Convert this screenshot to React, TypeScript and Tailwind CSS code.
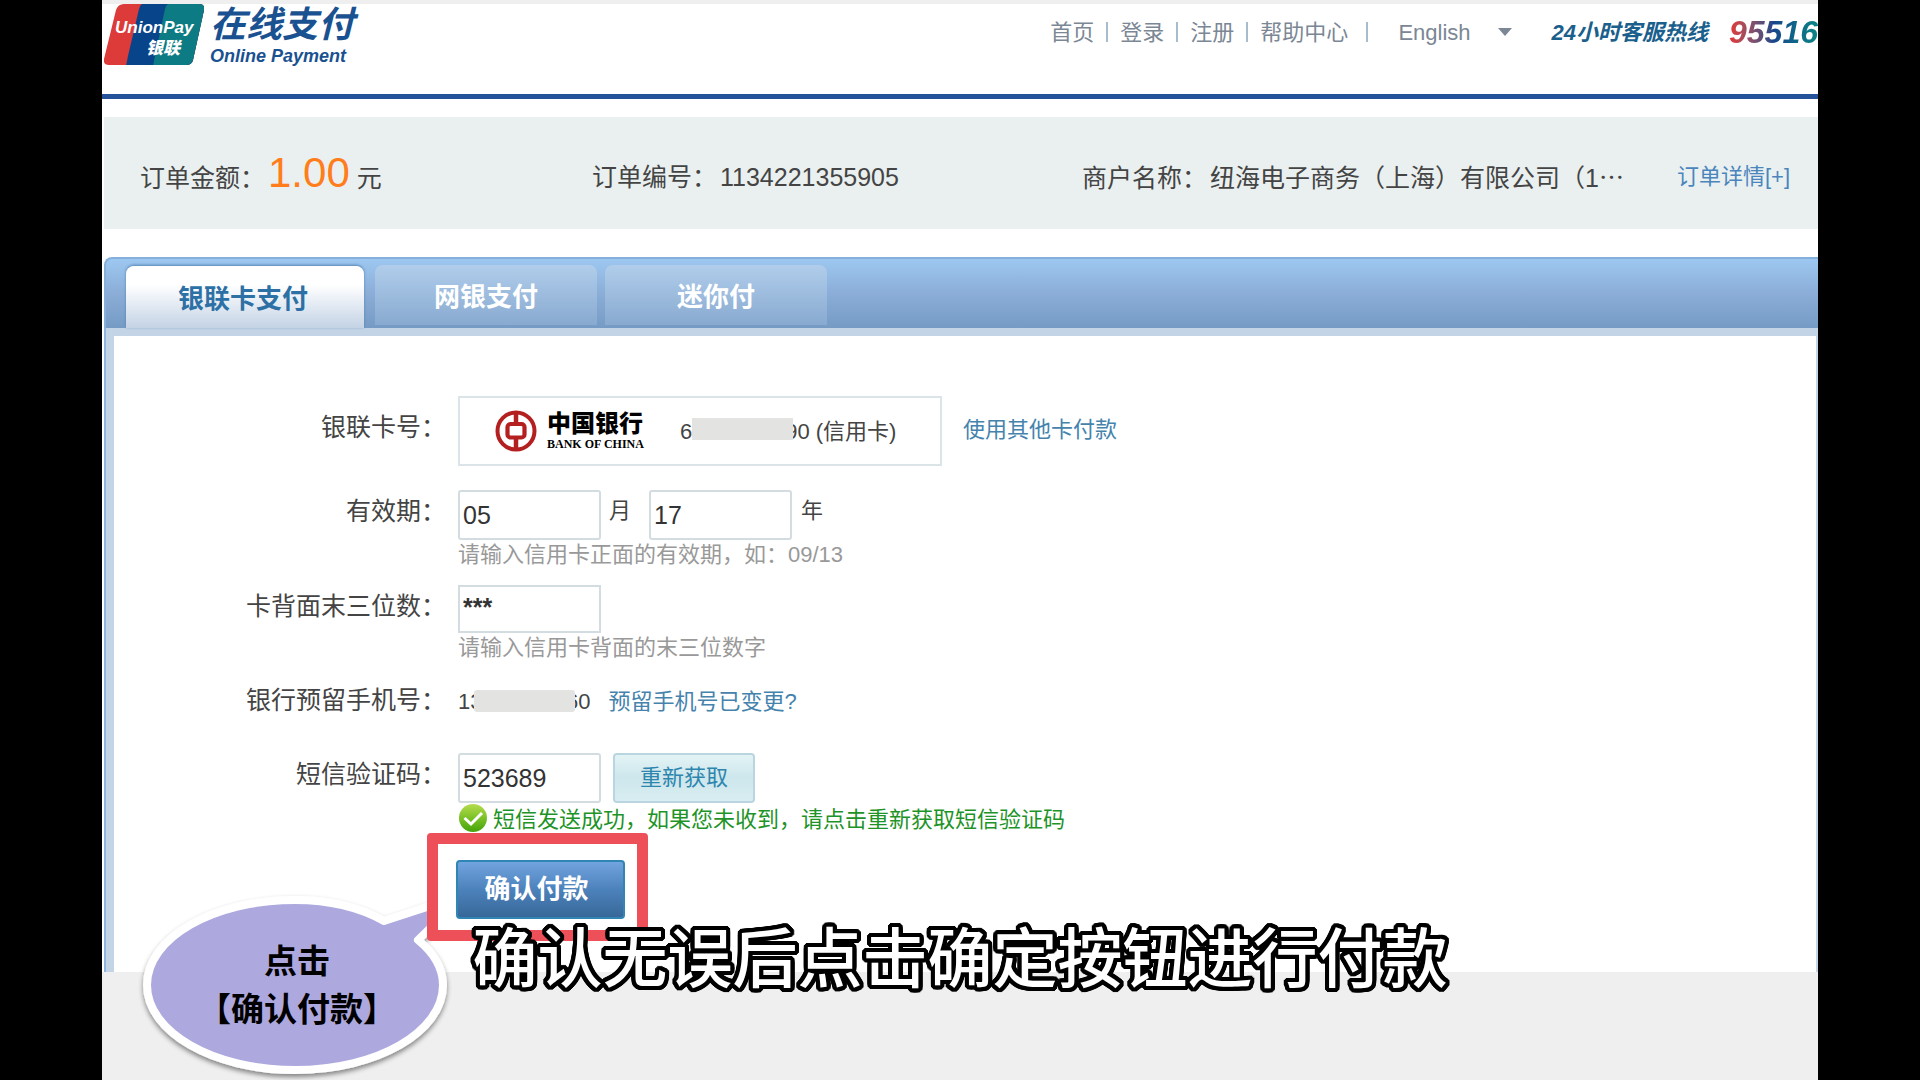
import React from "react";

const NAV_ITEMS = ["首页", "登录", "注册", "帮助中心"];

function UnionPayLogo() {
  return (
    <svg className="h-[62px] w-[100px] shrink-0" viewBox="0 0 100 62" role="img" aria-label="UnionPay 银联">
      <defs>
        <clipPath id="card">
          <path d="M20 0H95Q101 0 100 6L89 56Q88 61 82 61H5Q-1 61 0 55L12 6Q14 0 20 0Z" />
        </clipPath>
      </defs>
      <g clipPath="url(#card)">
        <rect width="100" height="62" fill="#dd3a3a" />
        <path d="M38 0H100V62H22L24 52L35 5Q36 1 38 0Z" fill="#084489" />
        <path d="M64 0H100V62H49L51 52L61 5Q62 1 64 0Z" fill="#0d7b83" />
      </g>
      <text x="11" y="29" fill="#fff" fontFamily="Liberation Sans" fontStyle="italic" fontWeight="700" fontSize="17">
        UnionPay
      </text>
      <text x="42" y="50" fill="#fff" fontFamily="Noto Sans CJK SC" fontStyle="italic" fontWeight="900" fontSize="17">
        银联
      </text>
    </svg>
  );
}

function BankMark() {
  return (
    <svg className="h-[42px] w-[42px]" viewBox="0 0 42 42" fill="none" stroke="#b3201f" aria-hidden="true">
      <circle cx="21" cy="21" r="18.5" strokeWidth="4" />
      <path d="M21 3V13M21 28V39" strokeWidth="4.5" />
      <rect x="12.5" y="14" width="17" height="13.5" rx="3" strokeWidth="4.2" />
    </svg>
  );
}

function SuccessIcon() {
  return (
    <svg className="h-[30px] w-[30px]" viewBox="0 0 30 30" aria-hidden="true">
      <defs>
        <linearGradient id="ok" x1="0" y1="0" x2="0" y2="1">
          <stop offset="0" stopColor="#b5dc4e" />
          <stop offset="0.5" stopColor="#7cc128" />
          <stop offset="1" stopColor="#44a307" />
        </linearGradient>
      </defs>
      <circle cx="15" cy="14" r="14" fill="url(#ok)" />
      <path d="M6.500 14L13 20L24 9" fill="none" stroke="#fff" strokeWidth="3" />
    </svg>
  );
}

function Header() {
  return (
    <header className="flex items-start justify-between border-b-[5px] border-[#24529a] bg-white">
      <div className="flex h-[90px] gap-[6px] pl-[2px]">
        <UnionPayLogo />
        <div className="font-bold italic text-[#1a5190]">
          <div className="text-[36px] leading-[42px]">在线支付</div>
          <div className="text-[18px] leading-[20px]">Online Payment</div>
        </div>
      </div>
      <div className="flex h-[56px] items-center text-[22px] text-[#7b8794]">
        <nav className="flex items-center">
          {NAV_ITEMS.map((item) => (
            <React.Fragment key={item}>
              <a href="#">{item}</a>
              <span className="mx-[12px] h-[20px] w-[2px] bg-[#a9bccb] last:mx-[18px]" />
            </React.Fragment>
          ))}
        </nav>
        <button type="button" className="ml-[12px] flex items-center gap-[27px]">
          English
          <svg className="h-[8px] w-[14px]" viewBox="0 0 14 8" fill="#7b8794" aria-hidden="true">
            <path d="M0 0H14L7 8Z" />
          </svg>
        </button>
        <span className="ml-[40px] font-bold italic text-[#1b5f8c]">24小时客服热线</span>
        <strong className="ml-[21px] bg-gradient-to-r from-[#e8312f] via-[#17458a] to-[#0b8585] bg-clip-text text-[32px] italic text-transparent">
          95516
        </strong>
      </div>
    </header>
  );
}

function OrderBar() {
  return (
    <section className="mt-[18px] ml-[2px] flex h-[112px] items-center whitespace-nowrap bg-[#eaf0f0] pt-[10px] text-[25px] text-[#444]">
      <div className="flex w-[452px] items-baseline pb-[10px] pl-[36px]">
        订单金额：
        <span className="ml-[3px] text-[42px] leading-[50px] text-[#ff7d1a]">1.00</span>
        <span className="ml-[7px]">元</span>
      </div>
      <div className="w-[526px] pl-[36px]">
        订单编号：<span className="ml-[3px]">1134221355905</span>
      </div>
      <div className="flex flex-1 items-center justify-between pr-[28px]">
        <span lang="zh-CN">
          商户名称：<span className="ml-[3px]">纽海电子商务（上海）有限公司（1</span>
          <span className="font-['Noto_Sans_CJK_SC',sans-serif]">…</span>
        </span>
        <a href="#" className="pb-[4px] text-[22px] text-[#4a86bd]">订单详情[+]</a>
      </div>
    </section>
  );
}

function Tabs() {
  return (
    <div
      role="tablist"
      className="mt-[28px] ml-[2px] flex h-[71px] items-end gap-[8px] rounded-tl-[8px] border-t-2 border-l-2 border-[#86b0dc] bg-gradient-to-b from-[#9dc8f1] via-[#8badd7] to-[#759bc4] pl-[20px] text-[26px] font-bold text-white"
    >
      <button
        type="button"
        role="tab"
        aria-selected="true"
        className="mr-[3px] h-[62px] w-[238px] rounded-t-[8px] bg-gradient-to-b from-white from-30% to-[#c4d3e5] pt-[4px] pr-[4px] text-[#2c70a5] shadow-[0_-1px_3px_#5482b4]"
      >
        银联卡支付
      </button>
      <button type="button" role="tab" aria-selected="false" className="mb-[3px] h-[60px] w-[222px] rounded-t-[8px] bg-gradient-to-b from-[#b1cdeb] to-[#88aad0] pt-[4px]">
        网银支付
      </button>
      <button type="button" role="tab" aria-selected="false" className="mb-[3px] h-[60px] w-[222px] rounded-t-[8px] bg-gradient-to-b from-[#b1cdeb] to-[#88aad0] pt-[4px]">
        迷你付
      </button>
    </div>
  );
}

type RowProps = { label: string; htmlFor?: string; tall?: boolean; className?: string; children: React.ReactNode };

function Row({ label, htmlFor, tall, className, children }: RowProps) {
  const cls = tall ? "leading-[62px]" : "leading-[42px]";
  return (
    <div className={`flex items-start gap-[12px] ${className ?? ""}`}>
      <label htmlFor={htmlFor} className={`w-[332px] shrink-0 text-right text-[25px] text-[#444] ${cls}`}>
        {label}
      </label>
      <div>{children}</div>
    </div>
  );
}

function Field({ id, value, label }: { id: string; value: string; label?: string }) {
  return (
    <input
      id={id}
      type="text"
      aria-label={label}
      defaultValue={value}
      className="h-[50px] w-[143px] rounded-[3px] border-2 border-[#d3dce0] bg-white pl-[3px] text-[25px] text-[#333] outline-none"
    />
  );
}

function PaymentForm() {
  return (
    <div className="ml-[2px] border-l-2 border-[#8fb4df]">
      <form className="border-t-8 border-r-2 border-l-8 border-[#c4d4e7] bg-white pt-[60px] pb-[31px] text-[22px]">
        <Row label="银联卡号：" tall>
          <div className="flex items-center gap-[21px]">
            <div className="flex h-[70px] w-[484px] items-center border-2 border-[#dbe4e8] pl-[35px] text-[#444]">
              <BankMark />
              <div className="ml-[10px] text-black">
                <div className="text-[24px] font-black leading-[26px]">中国银行</div>
                <div className="font-['Liberation_Serif',serif] text-[12px] font-bold leading-[14px]">BANK OF CHINA</div>
              </div>
              <span className="ml-[36px]">6</span>
              <span className="z-10 mb-[4px] h-[22px] w-[101px] bg-[#e3e4e2]" />
              <span className="-ml-[8px]">90 (信用卡)</span>
            </div>
            <a href="#" className="pb-[3px] text-[#4583ad]">使用其他卡付款</a>
          </div>
        </Row>

        <Row label="有效期：" htmlFor="month" className="mt-[24px]">
          <div className="flex text-[#444]">
            <Field id="month" value="05" />
            <label htmlFor="month" className="mx-[8px] w-[32px] leading-[42px]">月</label>
            <Field id="year" value="17" label="年" />
            <label htmlFor="year" className="ml-[9px] leading-[42px]">年</label>
          </div>
          <p className="leading-[30px] text-[#999]">请输入信用卡正面的有效期，如：09/13</p>
        </Row>

        <Row label="卡背面末三位数：" htmlFor="cvn" className="mt-[15px]">
          <input
            id="cvn"
            type="text"
            defaultValue="***"
            className="block h-[48px] w-[143px] border-2 border-[#d3dce0] bg-white pb-[4px] pl-[3px] text-[25px] font-bold text-[#333] outline-none"
          />
          <p className="leading-[30px] text-[#999]">请输入信用卡背面的末三位数字</p>
        </Row>

        <Row label="银行预留手机号：" className="mt-[16px]">
          <div className="flex h-[44px] items-center text-[#444]">
            <span className="w-[16px]">13</span>
            <span className="z-10 h-[22px] w-[101px] rounded-[3px] bg-[#e3e4e2]" />
            <span className="-ml-[9px]">60</span>
            <a href="#" className="ml-[18px] text-[#4583ad]">预留手机号已变更?</a>
          </div>
        </Row>

        <Row label="短信验证码：" htmlFor="sms" className="mt-[30px]">
          <div className="flex gap-[12px]">
            <Field id="sms" value="523689" />
            <button
              type="button"
              className="h-[50px] w-[142px] rounded-[4px] border-2 border-[#b9d6e0] bg-gradient-to-b from-[#e3f3f5] via-[#cde7ec] to-[#d9edf2] pb-[2px] text-[#2e86ae]"
            >
              重新获取
            </button>
          </div>
          <p className="flex h-[30px] items-center gap-[5px] whitespace-nowrap pt-[2px] text-[#1e9327]">
            <SuccessIcon />
            短信发送成功，如果您未收到，请点击重新获取短信验证码
          </p>
        </Row>

        <div className="relative z-20 ml-[313px] flex h-[108px] w-[221px] items-center justify-center rounded-[4px] border-[11px] border-[#ee5059] bg-white pt-[4px] pl-[6px]">
          <button
            type="submit"
            className="h-[59px] w-[169px] rounded-[4px] border-2 border-[#2f86b4] bg-gradient-to-b from-[#72a4e0] via-[#4c82bb] to-[#386899] pr-[8px] text-[26px] font-bold text-white"
          >
            确认付款
          </button>
        </div>
      </form>
    </div>
  );
}

function Callout() {
  return (
    <aside className="absolute bottom-0 left-[32px] z-10 h-[190px] w-[330px]">
      <svg className="absolute inset-0 h-full w-full overflow-visible" viewBox="0 0 330 190" aria-hidden="true">
        <defs>
          <filter id="soft" x="-10%" y="-10%" width="120%" height="125%">
            <feDropShadow dx="0" dy="3" stdDeviation="2.5" floodColor="#000" floodOpacity="0.45" />
          </filter>
        </defs>
        <path
          d="M250 31 C225 17 193 10 161 10 C79 10 13 48 13 95 C13 142 79 180 161 180 C243 180 309 142 309 95 C309 79 301 64 284 50 L325 10 L293 17 Z"
          fill="#ada9df"
          stroke="#fff"
          strokeWidth="8"
          strokeLinejoin="round"
          filter="url(#soft)"
        />
      </svg>
      <p className="relative w-[326px] pt-[48px] text-center text-[33px] font-bold leading-[48px] text-black">
        点击
        <br />
        【确认付款】
      </p>
    </aside>
  );
}

export default function App() {
  return (
    <div className="min-h-screen bg-black px-[102px] font-['Liberation_Sans','Noto_Sans_CJK_SC',sans-serif]" lang="zh-CN">
      <main className="relative min-h-screen overflow-hidden bg-[#efefef]">
        <div className="mt-[4px] bg-white">
          <Header />
          <OrderBar />
          <Tabs />
          <PaymentForm />
        </div>
        <Callout />
        <p className="absolute inset-x-0 bottom-[80px] z-30 text-center text-[65px] font-medium leading-[80px] text-white [text-shadow:4px_0_#000,4px_1px_#000,4px_2px_#000,3px_3px_#000,2px_4px_#000,1px_4px_#000,0_4px_#000,-1px_4px_#000,-2px_4px_#000,-3px_3px_#000,-4px_2px_#000,-4px_1px_#000,-4px_0_#000,-4px_-1px_#000,-4px_-2px_#000,-3px_-3px_#000,-2px_-4px_#000,-1px_-4px_#000,0_-4px_#000,1px_-4px_#000,2px_-4px_#000,3px_-3px_#000,4px_-2px_#000,4px_-1px_#000,2px_0_#000,-2px_0_#000,0_2px_#000,0_-2px_#000]">
          确认无误后点击确定按钮进行付款
        </p>
      </main>
    </div>
  );
}
